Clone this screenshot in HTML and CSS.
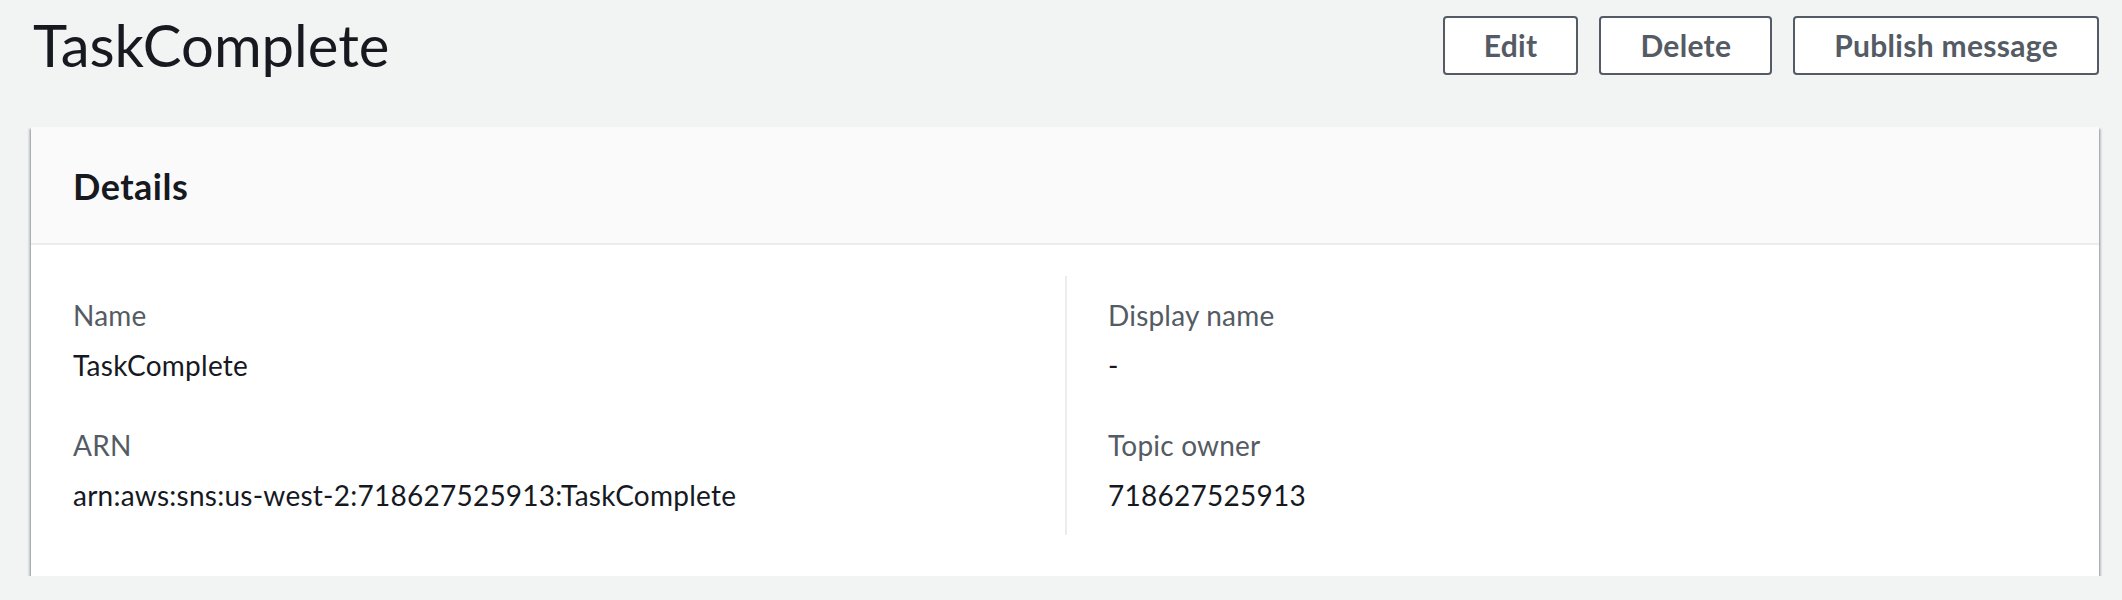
FILE: index.html
```html
<!DOCTYPE html>
<html lang="en">
<head>
<meta charset="utf-8">
<title>TaskComplete</title>
<link rel="stylesheet" href="styles.css">
</head>
<body>
<div class="page">
  <div class="page-header">
    <h1 class="title">TaskComplete</h1>
    <div class="actions">
      <button class="btn">Edit</button>
      <button class="btn">Delete</button>
      <button class="btn">Publish message</button>
    </div>
  </div>
  <section class="card">
    <div class="card-header">
      <h2 class="card-title">Details</h2>
    </div>
    <div class="card-body">
      <div class="col">
        <div class="field">
          <div class="label">Name</div>
          <div class="value">TaskComplete</div>
        </div>
        <div class="field">
          <div class="label">ARN</div>
          <div class="value">arn:aws:sns:us-west-2:718627525913:TaskComplete</div>
        </div>
      </div>
      <div class="col col-right">
        <div class="field">
          <div class="label">Display name</div>
          <div class="value">-</div>
        </div>
        <div class="field">
          <div class="label">Topic owner</div>
          <div class="value">718627525913</div>
        </div>
      </div>
    </div>
  </section>
</div>
</body>
</html>
```

FILE: styles.css
```css
* { box-sizing: border-box; }
html, body { margin: 0; padding: 0; }
body {
  background: #f2f3f3;
  font-family: Lato, "Open Sans", sans-serif;
  color: #16191f;
}
.page {
  padding: 11px 23px 0 31px;
}
.page-header {
  display: flex;
  align-items: center;
  justify-content: space-between;
  height: 68px;
}
.title {
  margin: 0 0 0 2px;
  font-size: 58px;
  line-height: 68px;
  font-weight: 400;
  color: #16191f;
}
.actions {
  display: flex;
  gap: 21px;
}
.btn {
  font-family: Lato, "Open Sans", sans-serif;
  font-weight: 700;
  font-size: 30px;
  letter-spacing: 0.3px;
  line-height: 38px;
  height: 59px;
  padding: 8px 39px;
  border: 2px solid #545b64;
  border-radius: 4px;
  background: #ffffff;
  color: #545b64;
}
.card {
  margin-top: 48px;
  background: #ffffff;
  box-shadow: 0 2px 2px 0 rgba(0, 28, 36, 0.45), 2px 2px 2px 0 rgba(0, 28, 36, 0.2), -2px 2px 2px 0 rgba(0, 28, 36, 0.2);
}
.card-header {
  background: #fafafa;
  padding: 37px 42px 35px;
  border-bottom: 2px solid #eaeded;
}
.card-title {
  margin: 0;
  font-size: 36px;
  letter-spacing: 0.5px;
  line-height: 44px;
  font-weight: 700;
  color: #16191f;
}
.card-body {
  display: grid;
  grid-template-columns: 1fr 1fr;
  padding: 31px 42px 41px;
}
.col {
  display: flex;
  flex-direction: column;
  gap: 40px;
  padding: 19px 0 20px;
}
.col-right {
  border-left: 2px solid #eaeded;
  padding-left: 41px;
}
.field {
  display: flex;
  flex-direction: column;
  gap: 10px;
}
.label {
  font-size: 28px;
  letter-spacing: 0.2px;
  line-height: 40px;
  color: #545b64;
}
.value {
  font-size: 28px;
  letter-spacing: 0.25px;
  line-height: 40px;
  color: #16191f;
}
```
